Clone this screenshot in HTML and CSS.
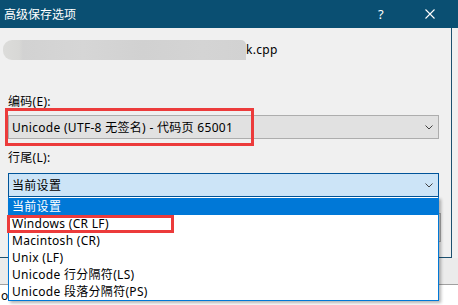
FILE: index.html
```html
<!DOCTYPE html>
<html lang="zh-CN">
<head>
  <meta charset="UTF-8" />
  <title>高级保存选项</title>
  <link rel="stylesheet" href="styles.css">
</head>

<body>
  <div class="screen">
    <div class="window">
      <div class="titlebar">
        <span class="title">高级保存选项</span>
        <span class="help">?</span>
        <svg class="close" width="10" height="10" viewBox="0 0 10 10">
          <path d="M0.5 0.5 L9.5 9.5 M9.5 0.5 L0.5 9.5" stroke="#fff" stroke-width="1.1" fill="none" />
        </svg>
      </div>

      <div class="content">
        <div class="file">
          <span class="blur"></span>
          <span class="file-name">k.cpp</span>
        </div>

        <div class="field-label">编码(E):</div>
        <div class="combo-wrap marked">
          <div class="combo">
            <span>Unicode (UTF-8 无签名) - 代码页 65001</span>
            <svg class="chevron" width="8" height="5" viewBox="0 0 8 5">
              <path d="M0.5 0.5 L4 4 L7.5 0.5" stroke="#404040" stroke-width="1" fill="none" />
            </svg>
          </div>
        </div>

        <div class="field-label second">行尾(L):</div>
        <div class="combo-wrap">
          <div class="combo open">
            <span>当前设置</span>
            <svg class="chevron" width="8" height="5" viewBox="0 0 8 5">
              <path d="M0.5 0.5 L4 4 L7.5 0.5" stroke="#404040" stroke-width="1" fill="none" />
            </svg>
          </div>
          <ul class="list">
            <li class="selected">当前设置</li>
            <li class="marked-row">Windows (CR LF)</li>
            <li>Macintosh (CR)</li>
            <li>Unix (LF)</li>
            <li>Unicode 行分隔符(LS)</li>
            <li>Unicode 段落分隔符(PS)</li>
          </ul>
        </div>

        <div class="buttons">
          <button type="button">确定</button>
          <button type="button">取消</button>
        </div>
      </div>
    </div>

    <div class="behind"></div>
    <div class="editor">o</div>
  </div>
</body>
</html>
```

FILE: styles.css
```css
body {
  margin: 0;
  background: #ffffff;
  font-family: "Noto Sans", "Noto Sans CJK SC", sans-serif;
  font-size: 12px;
  letter-spacing: 0.3px;
  color: #000000;
  overflow: hidden;
}

.screen {
  width: 458px;
  height: 305px;
  background: #f0f0f0;
  overflow: hidden;
}

.window {
  display: flex;
  flex-direction: column;
  height: 258px;
}

.titlebar {
  display: flex;
  align-items: center;
  height: 28px;
  padding: 0 0 1px 4px;
  box-sizing: border-box;
  background: #0a4f72;
  color: #ffffff;
}

.title {
  flex: 1;
  font-size: 12px;
  letter-spacing: 0;
}

.help {
  width: 10px;
  margin-right: 37px;
  font-size: 13px;
}

.close {
  margin-right: 23px;
}

.content {
  flex: 1;
  width: 452px;
  padding: 12px 12px 0 8px;
  box-sizing: border-box;
  border-right: 1px solid #1d5170;
  border-bottom: 1px solid #1d5170;
  display: flex;
  flex-direction: column;
}

.file {
  display: flex;
  align-items: center;
  height: 20px;
  margin-left: -5px;
}

.blur {
  width: 243px;
  height: 20px;
  border-radius: 9px 5px 0 9px;
  background: linear-gradient(90deg, #dcdcda 0, #d8d8d6 16px, #d2d2d2 20px, #d6d6d6 80px, #d1d1d1 140px, #d4d4d4 200px, #d2d2d2 243px);
}

.file-name {
  margin-top: -1px;
}

.field-label {
  height: 16px;
  line-height: 16px;
  margin: 34px 0 5px;
}

.field-label.second {
  margin: 11px 0 7px;
}

.combo-wrap {
  position: relative;
}

.combo {
  display: flex;
  align-items: center;
  justify-content: space-between;
  height: 24px;
  padding: 0 5px 0 3px;
  box-sizing: border-box;
  background: #e1e1e1;
  border: 1px solid #adadad;
}

.combo.open {
  background: #cce4f7;
  border-color: #005499;
}

.chevron {
  margin-top: 1px;
}

/* red annotation boxes */
.combo-wrap.marked::after {
  content: "";
  position: absolute;
  left: -3px;
  top: -7px;
  width: 249px;
  height: 38px;
  border: 3px solid #ec3b3b;
  box-sizing: border-box;
}

.list {
  position: absolute;
  top: 100%;
  left: 0;
  right: 0;
  z-index: 2;
  margin: 0;
  padding: 1px 0 0;
  list-style: none;
  background: #ffffff;
  border: 1px solid #0078d7;
  border-top: none;
  box-shadow: 2px 2px 3px rgba(0, 0, 0, 0.3);
}

.list li {
  position: relative;
  height: 17px;
  line-height: 17px;
  padding-left: 3px;
}

.list li.selected {
  background: #0078d7;
  color: #ffffff;
}

.list li.marked-row::after {
  content: "";
  position: absolute;
  left: -2px;
  top: 0;
  width: 167px;
  height: 18px;
  border: 3px solid #ec3b3b;
  box-sizing: border-box;
}

.buttons {
  display: flex;
  justify-content: flex-end;
  gap: 8px;
  margin-top: 16px;
  margin-right: -2px;
}

.buttons button {
  width: 75px;
  height: 29px;
  background: #e1e1e1;
  border: 1px solid #adadad;
  font-family: inherit;
  font-size: 12px;
}

.behind {
  height: 26px;
  background: #ebebeb;
  border-bottom: 1px solid #a0a0a0;
}

.editor {
  height: 30px;
  background: #ffffff;
  padding: 3px 0 0 1px;
  line-height: 16px;
}
```
